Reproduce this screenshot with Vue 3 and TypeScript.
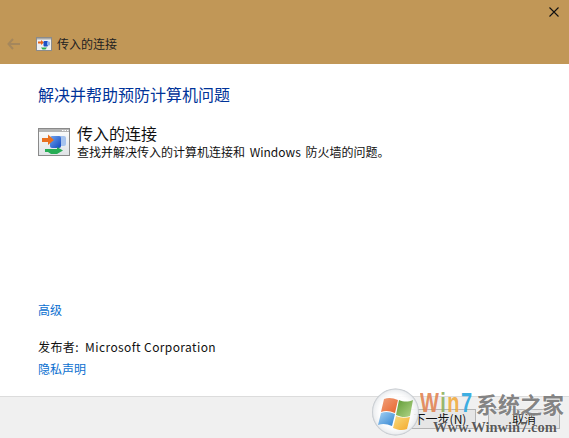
<script setup lang="ts">
const title = "传入的连接";
</script>

<template>
  <div class="wizard">
    <header class="titlebar">
      <div class="close-row">
        <svg class="close" width="10" height="10" viewBox="0 0 10 10">
          <path d="M0.5 0.5L9.5 9.5M9.5 0.5L0.5 9.5" stroke="#111" stroke-width="1.1" fill="none" />
        </svg>
      </div>
      <div class="nav-row">
        <svg class="back" width="14" height="12" viewBox="0 0 14 12">
          <path d="M6 1L1.5 6L6 11M1.5 6H13" stroke="#a5875c" stroke-width="2" fill="none" />
        </svg>
        <svg class="app-icon" width="16" height="14" viewBox="0 0 16 14">
          <rect x="0.5" y="0.5" width="15" height="13" fill="#eef0f2" stroke="#8b8b8b" />
          <rect x="1" y="1" width="14" height="1.5" fill="#a9a9a9" />
          <path d="M2 4.5H5V3L8 5.5L5 8V6.5H2Z" fill="#e8651a" />
          <rect x="7.5" y="4" width="4.5" height="5.5" rx="1" fill="#1d4fc4" />
          <rect x="11" y="4.5" width="3" height="4" rx="1" fill="#8fb2e8" />
          <path d="M5 10.5H11L9.5 12.5H6.5Z" fill="#2fae55" />
        </svg>
        <span class="nav-title">{{ title }}</span>
      </div>
    </header>

    <main class="content">
      <h1 class="heading">解决并帮助预防计算机问题</h1>
      <div class="item">
        <svg class="item-icon" width="32" height="28" viewBox="0 0 32 28">
          <defs>
            <linearGradient id="win" x1="0" y1="0" x2="0" y2="1">
              <stop offset="0" stop-color="#fdfdfd" />
              <stop offset="1" stop-color="#dfe3e6" />
            </linearGradient>
            <linearGradient id="screen" x1="0" y1="0" x2="1" y2="1">
              <stop offset="0" stop-color="#6fa4f0" />
              <stop offset="1" stop-color="#1247bd" />
            </linearGradient>
          </defs>
          <rect x="0.5" y="0.5" width="31" height="27" fill="url(#win)" stroke="#8a8a8a" />
          <rect x="1" y="1" width="30" height="3" fill="#b4b4b4" />
          <rect x="24" y="2" width="1.5" height="1" fill="#fff" />
          <rect x="26.5" y="2" width="1.5" height="1" fill="#fff" />
          <rect x="29" y="2" width="1.5" height="1" fill="#fff" />
          <rect x="19" y="8" width="9" height="10" rx="2" fill="#a6c3ee" />
          <rect x="12" y="8" width="11" height="12" rx="2" fill="url(#screen)" />
          <path d="M4 10H10V6.5L16 12L10 17V14H4Z" fill="#e9701e" />
          <path d="M7 21H19V19L25 22.5L19 26H13L10 24H7Z" fill="#27ad55" />
        </svg>
        <div class="item-text">
          <div class="item-title">{{ title }}</div>
          <div class="item-desc">查找并解决传入的计算机连接和 Windows 防火墙的问题。</div>
        </div>
      </div>
      <div class="spacer"></div>
      <a class="link advanced">高级</a>
      <div class="publisher">发布者:&nbsp; Microsoft Corporation</div>
      <a class="link privacy">隐私声明</a>
    </main>

    <footer class="footer">
      <button class="btn next">下一步(N)</button>
      <button class="btn cancel">取消</button>
    </footer>

    <div class="watermark">
      <svg class="wm-logo" width="48" height="50" viewBox="0 0 48 50">
        <defs>
          <radialGradient id="orb" cx="0.5" cy="0.5" r="0.5">
            <stop offset="0.7" stop-color="#ffffff" stop-opacity="0.85" />
            <stop offset="0.93" stop-color="#eceef0" />
            <stop offset="1" stop-color="#b9bec4" />
          </radialGradient>
          <linearGradient id="pane-r" x1="0" y1="0" x2="1" y2="1">
            <stop offset="0" stop-color="#f0a07a" />
            <stop offset="1" stop-color="#e8642c" />
          </linearGradient>
          <linearGradient id="pane-g" x1="0" y1="0" x2="1" y2="1">
            <stop offset="0" stop-color="#5f9a35" />
            <stop offset="1" stop-color="#b4d68a" />
          </linearGradient>
          <linearGradient id="pane-b" x1="0" y1="0" x2="1" y2="1">
            <stop offset="0" stop-color="#a8d3f3" />
            <stop offset="1" stop-color="#2f83d2" />
          </linearGradient>
          <linearGradient id="pane-y" x1="0" y1="0" x2="1" y2="1">
            <stop offset="0" stop-color="#f9dc7e" />
            <stop offset="1" stop-color="#f4a92d" />
          </linearGradient>
        </defs>
        <circle cx="23.5" cy="24" r="23.5" fill="url(#orb)" />
        <path d="M12 11C17 9 21 10 26 12L23 25C18 23 14 22 9 24Z" fill="url(#pane-r)" />
        <path d="M27 12C32 14 36 14 41 12L38 28C33 30 29 29 24 27Z" fill="url(#pane-g)" />
        <path d="M9 25C14 23 18 24 23 26L20 38C15 36 11 35 6 37Z" fill="url(#pane-b)" />
        <path d="M24 28C29 30 33 30 38 29L35 41C30 43 26 42 21 40Z" fill="url(#pane-y)" />
      </svg>
      <div class="wm-brand">
        <span class="wm-latin"><span class="wm-w">W</span><span class="wm-i">i</span><span class="wm-n">n</span><span class="wm-7">7</span></span><span class="wm-cn">系统之家</span>
      </div>
      <div class="wm-url">Www.Winwin7.com</div>
    </div>
  </div>
</template>

<style scoped>
.wizard {
  position: relative;
  width: 569px;
  height: 438px;
  display: flex;
  flex-direction: column;
  overflow: hidden;
  background: #fff;
  font-family: "Noto Sans CJK SC", "Noto Sans", sans-serif;
  color: #111;
}

.titlebar {
  height: 64px;
  flex: none;
  background: #c19757;
  box-sizing: border-box;
}

.close-row {
  display: flex;
  justify-content: flex-end;
  padding: 7px 10px 0 0;
  height: 24px;
  box-sizing: border-box;
}

.close {
  display: block;
}

.nav-row {
  display: flex;
  align-items: center;
  height: 40px;
  padding-left: 7px;
  box-sizing: border-box;
}

.app-icon {
  margin-left: 15px;
}

.nav-title {
  margin-left: 5px;
  font-size: 12px;
  line-height: 16px;
  color: #222;
}

.content {
  flex: 1;
  display: flex;
  flex-direction: column;
  padding: 19px 0 0 38px;
  box-sizing: border-box;
}

.heading {
  margin: 0;
  font-size: 16px;
  line-height: 22px;
  font-weight: 400;
  color: #003399;
}

.item {
  display: flex;
  margin-top: 18px;
}

.item-icon {
  margin-top: 5px;
  flex: none;
}

.item-text {
  margin-left: 7px;
}

.item-title {
  font-size: 16px;
  line-height: 21px;
  color: #111;
}

.item-desc {
  font-size: 12px;
  line-height: 16px;
  word-spacing: 2px;
  color: #111;
}

.spacer {
  flex: 1;
}

.link {
  font-size: 12px;
  line-height: 16px;
  color: #0a6fd0;
}

.publisher {
  margin-top: 20px;
  font-size: 12px;
  line-height: 17px;
  color: #111;
  letter-spacing: 0.4px;
}

.privacy {
  margin-top: 6px;
  margin-bottom: 19px;
}

.footer {
  flex: none;
  height: 42px;
  box-sizing: border-box;
  background: #f0f0f0;
  border-top: 1px solid #dcdcdc;
  display: flex;
  justify-content: flex-end;
  gap: 12px;
  padding: 12px 9px 0 0;
}

.btn {
  width: 72px;
  height: 20px;
  padding: 0;
  box-sizing: border-box;
  background: #e6e6e6;
  border: 1px solid #b4b4b4;
  font-family: inherit;
  font-size: 12px;
  line-height: 18px;
  color: #111;
}

.watermark {
  position: absolute;
  left: 372px;
  top: 388px;
  width: 197px;
  height: 50px;
}

.wm-logo {
  position: absolute;
  left: 0;
  top: 0;
}

.wm-brand {
  position: absolute;
  left: 48px;
  top: 2px;
  display: flex;
  align-items: center;
  height: 26px;
  white-space: nowrap;
  font-weight: 700;
}

.wm-latin {
  display: inline-block;
  width: 56px;
  font-family: "Liberation Sans", sans-serif;
  font-size: 20px;
  line-height: 26px;
  letter-spacing: 1.5px;
  transform: scaleY(1.35);
}

.wm-w {
  color: rgba(226, 130, 80, 0.9);
}

.wm-i {
  color: rgba(140, 175, 90, 0.9);
}

.wm-n {
  color: rgba(240, 170, 60, 0.9);
}

.wm-7 {
  color: rgba(50, 170, 225, 0.95);
}

.wm-cn {
  font-family: "Noto Sans CJK SC", sans-serif;
  font-size: 22px;
  line-height: 26px;
  color: rgba(115, 115, 115, 0.9);
  text-shadow: 0 0 2px #fff;
}

.wm-url {
  position: absolute;
  left: 61px;
  top: 31px;
  white-space: nowrap;
  font-family: "Liberation Serif", serif;
  font-weight: 700;
  font-size: 14.5px;
  line-height: 17px;
  color: rgba(60, 60, 60, 0.85);
  text-shadow: 0 0 1px #fff;
}
</style>
